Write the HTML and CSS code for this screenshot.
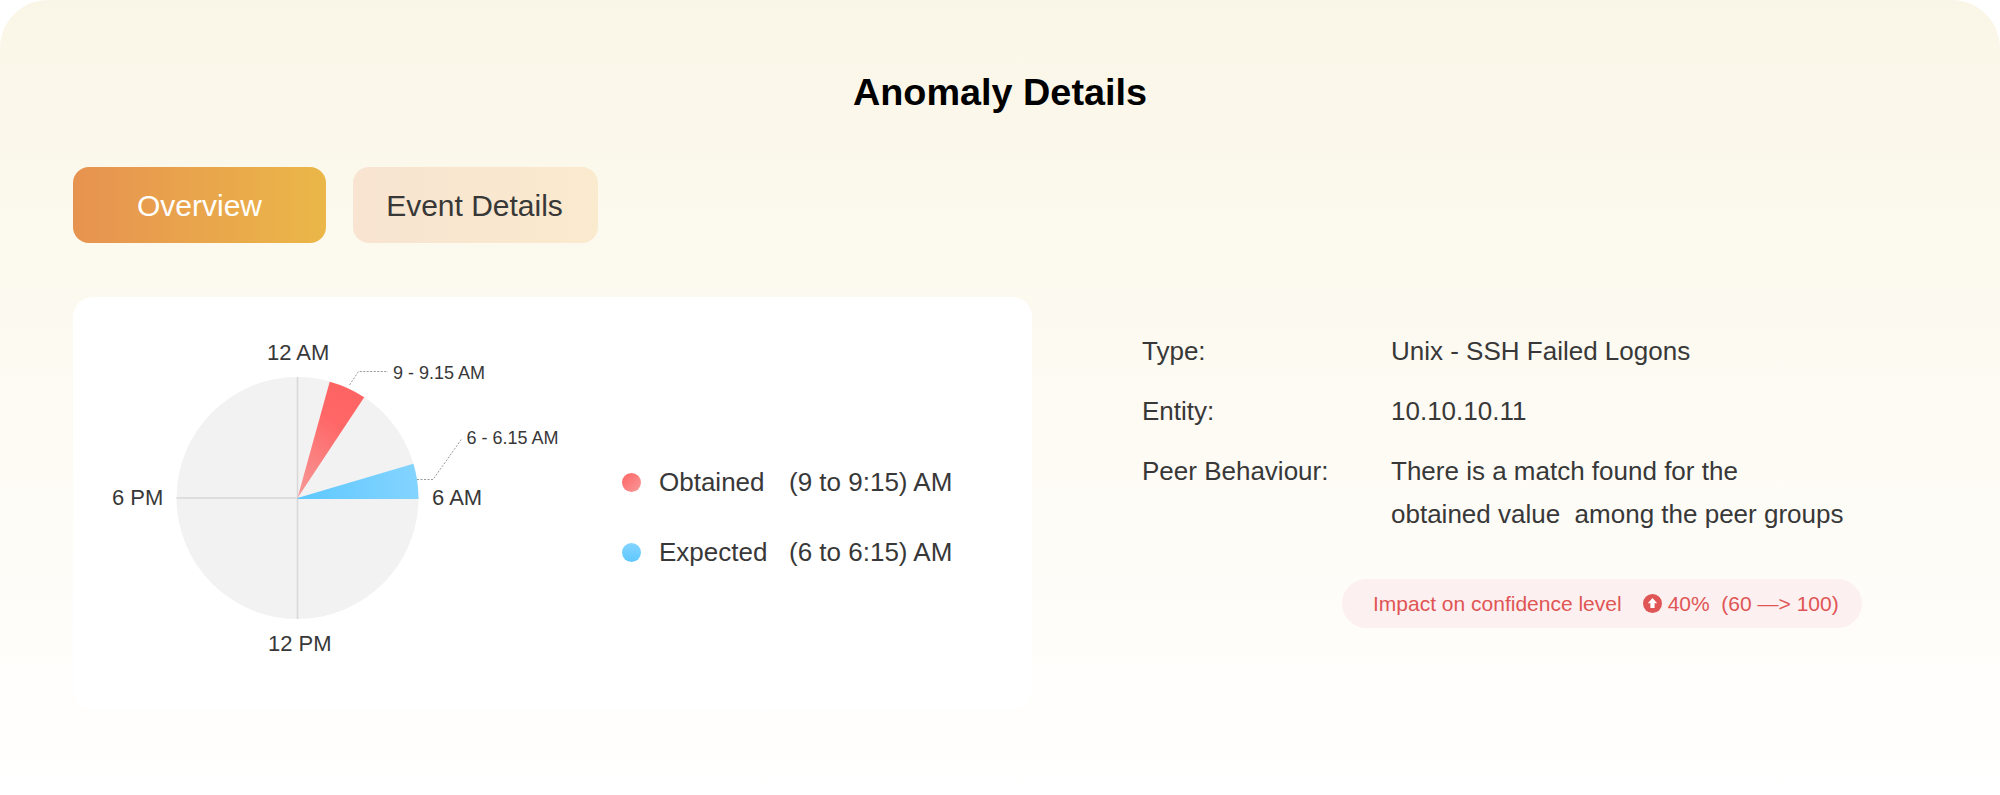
FILE: index.html
```html
<!DOCTYPE html>
<html lang="en">
<head>
    <meta charset="UTF-8">
    <title>Anomaly Details</title>
    <link rel="stylesheet" href="styles.css">
</head>
<body>
    <div class="panel">
        <h2 class="title">Anomaly Details</h2>

        <div class="tabs">
            <div class="tab active">Overview</div>
            <div class="tab">Event Details</div>
        </div>

        <div class="content">
            <div class="card">
                <svg class="pie" width="400" height="330" viewBox="73 297 400 330">
                    <defs>
                        <linearGradient id="redFill" x1="0" y1="1" x2="0.4" y2="0">
                            <stop offset="0" stop-color="#f79a9a"/>
                            <stop offset="0.75" stop-color="#ff6767"/>
                            <stop offset="1" stop-color="#ff6464"/>
                        </linearGradient>
                        <linearGradient id="blueFill" x1="0" y1="0" x2="1" y2="0">
                            <stop offset="0" stop-color="#5ec8ff"/>
                            <stop offset="1" stop-color="#84d4ff"/>
                        </linearGradient>
                    </defs>
                    <circle cx="297.5" cy="498" r="121" fill="#f2f2f2"/>
                    <path class="axis" d="M297.5 377V619M176.5 498H418.5"/>
                    <path d="M297.5 498L329.7 381.7A121 121 0 0 1 364.2 397.2Z" fill="url(#redFill)"/>
                    <path d="M297.5 498L413.4 463.8A121 121 0 0 1 418.5 499L297.5 499Z" fill="url(#blueFill)"/>
                    <path class="leader" d="M349.5 385L358.5 371.5H388"/>
                    <path class="leader" d="M417 479.5H433L462 438.5"/>
                    <text class="hour" x="267" y="360">12 AM</text>
                    <text class="hour" x="112" y="505">6 PM</text>
                    <text class="hour" x="432" y="505">6 AM</text>
                    <text class="hour" x="268" y="651">12 PM</text>
                    <text class="slot" x="393" y="379">9 - 9.15 AM</text>
                    <text class="slot" x="466.5" y="444">6 - 6.15 AM</text>
                </svg>

                <div class="legend">
                    <div class="legend-row">
                        <span class="dot red"></span>
                        <span class="legend-name">Obtained</span>
                        <span>(9 to 9:15) AM</span>
                    </div>
                    <div class="legend-row">
                        <span class="dot blue"></span>
                        <span class="legend-name">Expected</span>
                        <span>(6 to 6:15) AM</span>
                    </div>
                </div>
            </div>

            <div class="details">
                <div class="detail-row">
                    <div class="detail-label">Type:</div>
                    <div>Unix - SSH Failed Logons</div>
                </div>
                <div class="detail-row">
                    <div class="detail-label">Entity:</div>
                    <div>10.10.10.11</div>
                </div>
                <div class="detail-row">
                    <div class="detail-label">Peer Behaviour:</div>
                    <div>There is a match found for the<br>obtained value&nbsp; among the peer groups</div>
                </div>
                <div class="impact">
                    <span class="impact-text">Impact on confidence level</span>
                    <svg class="impact-icon" width="19" height="19" viewBox="0 0 19 19">
                        <circle cx="9.5" cy="9.5" r="9.5" fill="#e05555"/>
                        <path d="M9.5 4L14.2 9.2H11.6V14H7.4V9.2H4.8Z" fill="#fff"/>
                    </svg>
                    <span>40%&nbsp; (60 &mdash;&gt; 100)</span>
                </div>
            </div>
        </div>
    </div>
</body>
</html>
```

FILE: styles.css
```css
body {
    margin: 0;
    background: #fff;
    font-family: "Liberation Sans", Arial, sans-serif;
    color: #383838;
}

.panel {
    height: 795px;
    box-sizing: border-box;
    padding-top: 69px;
    border-radius: 48px 48px 0 0;
    background: linear-gradient(180deg, #faf6e7 0%, #fffefc 90%, #fff 100%);
    overflow: hidden;
}

.title {
    margin: 0;
    font-size: 37.8px;
    line-height: 46px;
    font-weight: bold;
    color: #000;
    text-align: center;
}

.tabs {
    display: flex;
    gap: 27px;
    margin: 52px 0 0 73px;
}

.tab {
    height: 76px;
    width: 245px;
    box-sizing: border-box;
    padding-right: 2px;
    border-radius: 16px;
    background: linear-gradient(90deg, #f8e4d1, #faeace);
    font-size: 30px;
    line-height: 77px;
    text-align: center;
}

.tab.active {
    width: 253px;
    padding-right: 0;
    background: linear-gradient(90deg, #e79350, #ebb748);
    color: #fff;
}

.content {
    display: flex;
    margin: 54px 0 0 73px;
}

.card {
    display: flex;
    width: 959px;
    height: 413px;
    border-radius: 20px;
    background: #fff;
}

.pie {
    flex: none;
    display: block;
    overflow: visible;
}

.axis {
    fill: none;
    stroke: #d8d8d8;
    stroke-width: 1.5;
}

.leader {
    fill: none;
    stroke: #999;
    stroke-width: 1;
    stroke-dasharray: 2 1.5;
}

.hour {
    font-size: 22px;
    fill: #383838;
}

.slot {
    font-size: 18px;
    fill: #383838;
}

.legend {
    margin: 151px 0 0 149px;
}

.legend-row {
    display: flex;
    align-items: center;
    height: 69.5px;
    font-size: 26px;
    white-space: nowrap;
}

.legend-name {
    width: 130px;
}

.dot {
    width: 19px;
    height: 19px;
    margin-right: 18px;
    border-radius: 50%;
}

.dot.red {
    background: linear-gradient(135deg, #ff6464, #f79a9a);
}

.dot.blue {
    background: linear-gradient(180deg, #84d4ff, #5ec8ff);
}

.details {
    margin: 33px 0 0 110px;
    font-size: 26px;
    line-height: 43px;
}

.detail-row {
    display: flex;
    margin-bottom: 17px;
}

.detail-label {
    width: 249px;
}

.impact {
    display: flex;
    align-items: center;
    width: 520px;
    height: 49px;
    box-sizing: border-box;
    margin: 43px 0 0 200px;
    padding-left: 31px;
    border-radius: 25px;
    background: #fcf0f0;
    color: #e05555;
    font-size: 21px;
    line-height: 49px;
    white-space: nowrap;
}

.impact-text {
    margin-right: 21px;
}

.impact-icon {
    margin-right: 6px;
}
```
